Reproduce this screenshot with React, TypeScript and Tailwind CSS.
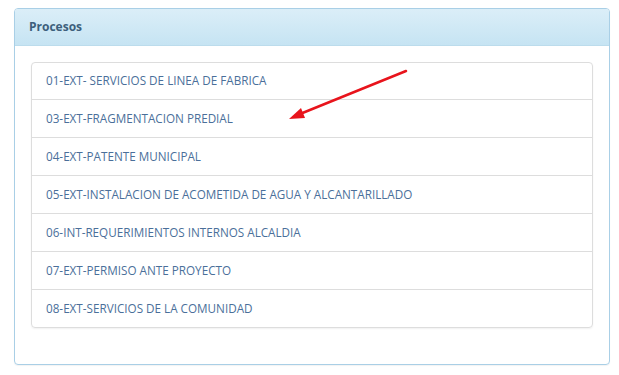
import React from 'react';

const procesos = [
  '01-EXT- SERVICIOS DE LINEA DE FABRICA',
  '03-EXT-FRAGMENTACION PREDIAL',
  '04-EXT-PATENTE MUNICIPAL',
  '05-EXT-INSTALACION DE ACOMETIDA DE AGUA Y ALCANTARILLADO',
  '06-INT-REQUERIMIENTOS INTERNOS ALCALDIA',
  '07-EXT-PERMISO ANTE PROYECTO',
  '08-EXT-SERVICIOS DE LA COMUNIDAD',
];

export default function App() {
  return (
    <div className="relative w-[619px] h-[375px] bg-white pt-[8px] pl-[14px] pr-[9px]" style={{ fontFamily: '"Open Sans", "Liberation Sans", sans-serif' }}>
      <div className="rounded-[4px] border border-[#a9cfe6] shadow-[0_1px_1px_rgba(0,0,0,0.05)]">
        {/* header */}
        <div className="h-[37px] flex items-center px-[14px] rounded-t-[3px] border-b border-[#bcdcec] bg-gradient-to-b from-[#dbeef8] to-[#c6e4f3]">
          <span className="text-[12px] font-bold text-[#3d5f7c]">Procesos</span>
        </div>
        {/* body */}
        <div className="px-[16px] pt-[16px] pb-[36px]">
          <div className="rounded-[4px] border border-[#dddddd] shadow-[0_1px_2px_rgba(0,0,0,0.06)]">
            {procesos.map((p, i) => (
              <div
                key={p}
                className={'flex items-center px-[14px] text-[11.7px] text-[#4a6f9a] ' + (i > 0 ? 'h-[38px] border-t border-[#dddddd]' : 'h-[36px]')}
              >
                {p}
              </div>
            ))}
          </div>
        </div>
      </div>
      {/* red annotation arrow */}
      <svg className="absolute left-0 top-0 pointer-events-none" width="619" height="375">
        <line x1="406" y1="71" x2="300" y2="114" stroke="#e8141c" strokeWidth="2.5" strokeLinecap="round" />
        <polygon points="289,119 301,108 305,118" fill="#e8141c" />
      </svg>
    </div>
  );
}
